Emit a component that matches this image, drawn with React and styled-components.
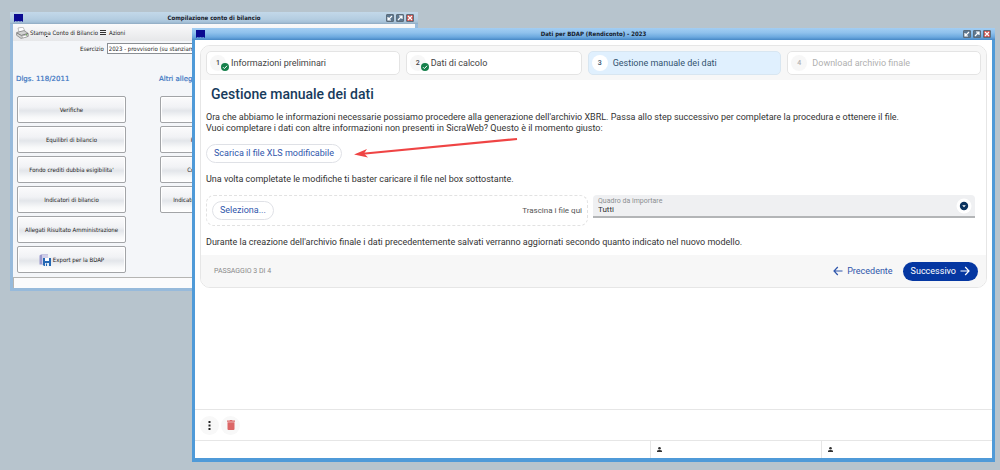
import React from "react";
import styled, { createGlobalStyle, css } from "styled-components";

const GlobalStyle = createGlobalStyle`
  *, *::before, *::after { box-sizing: border-box; }
  html, body { margin: 0; background: #b7c4cd; }
  button, input, select { font: inherit; color: inherit; }
  h1, h2, p { margin: 0; }
`;

const Desktop = styled.main`
  position: relative;
  min-height: 100vh;
  overflow: hidden;
  background: #b7c4cd;
`;

const Window = styled.section`
  position: absolute;
  display: flex;
  flex-direction: column;
  border-style: solid;
`;

const BackWindow = styled(Window)`
  top: 12px;
  left: 10px;
  width: calc(41% - 2px);
  border-width: 0 3px 3px;
  border-color: #97badb;
  background: #f4f6f9;
  color: #222;
  font: 6px/8px "DejaVu Sans Condensed", "DejaVu Sans", sans-serif;
`;

const FrontWindow = styled(Window)`
  top: 28px;
  right: 5px;
  bottom: 8px;
  left: 192px;
  border-width: 0 3px 4px;
  border-color: #4f9ad8;
  background: #fff;
  color: #333;
  font: 9px/11px Roboto, sans-serif;
`;

const TitleBar = styled.header`
  display: grid;
  grid-template-columns: 28px 1fr 28px;
  align-items: center;
  flex: none;
  height: 12px;
  margin: 0 -3px;
  padding: 0 4px;
  background: ${(p) =>
    p.$active
      ? "linear-gradient(#a3cef3 0%, #8fc1ec 40%, #6ca9df 75%, #4788c6 100%)"
      : "linear-gradient(#c3d8e9 0%, #b4cde1 60%, #a5c1d8 85%, #8fa9c0 100%)"};
`;

const WindowTitle = styled.h1`
  text-align: center;
  color: #16202c;
  font: bold 6px/10px "DejaVu Sans Condensed", "DejaVu Sans", sans-serif;
  white-space: nowrap;
`;

const WindowControls = styled.div`
  display: flex;
  gap: 2px;
`;

const ControlButton = styled.button`
  display: grid;
  place-items: center;
  width: 8px;
  height: 8px;
  padding: 0;
  border: 1px solid #5c6c7a;
  border-radius: 1px;
  color: #fff;
  background: ${(p) => (p.$close ? "#c8534f" : "#5d7790")};
`;

const Glyph = styled.svg`
  display: block;
  flex: none;
`;

const MenuBar = styled.nav`
  display: flex;
  align-items: center;
  gap: 2px;
  flex: none;
  height: 17px;
  padding: 0 3px;
  background: linear-gradient(#fafafb, #e6e7e9);
`;

const MenuButton = styled.button`
  display: flex;
  align-items: center;
  gap: ${(p) => p.$gap || 1}px;
  padding: 0;
  border: 0;
  background: none;
`;

const YearRow = styled.div`
  display: flex;
  align-items: center;
  gap: 3px;
  padding: 2px 8px 0 67px;
`;

const YearSelect = styled.select`
  appearance: none;
  flex: 1;
  min-width: 0;
  height: 11px;
  padding: 0 1px;
  border: 1px solid #8a8f94;
  border-radius: 0;
  background: #fff;
`;

const Groups = styled.div`
  display: flex;
  gap: 34px;
  padding: 20px 4px 4px;
`;

const Group = styled.div`
  display: flex;
  flex-direction: column;
  gap: 3px;
  flex: none;
  width: 109px;
`;

const GroupTitle = styled.h2`
  margin-bottom: 9px;
  margin-left: -1px;
  color: #3c75c2;
  font: 7px/10px "DejaVu Sans", sans-serif;
  -webkit-text-stroke: 0.2px #3c75c2;
`;

const ClassicButton = styled.button`
  display: flex;
  align-items: center;
  justify-content: center;
  gap: 2px;
  height: 27px;
  padding: 0;
  border: 1px solid #a2a4a7;
  border-radius: 2px;
  background: linear-gradient(#fbfbfc 0%, #f1f2f5 40%, #e3e6ea 55%, #f7f8f9 80%, #fff 100%);
  box-shadow: inset 0 0 0 1px #fff;
  white-space: nowrap;
`;

const ClassicStatus = styled.footer`
  height: 11px;
  border-top: 1px solid #b5b5b3;
  border-left: 1px solid #b5b5b3;
  background: #fbfbfc;
`;

const Workspace = styled.div`
  flex: 1;
  padding: 5px;
`;

const Card = styled.article`
  overflow: hidden;
  border: 1px solid #e6e6e6;
  border-radius: 10px;
`;

const Steps = styled.ol`
  display: grid;
  grid-template-columns: 1.1fr 1fr 1.1fr 1.1fr;
  gap: 6px;
  margin: 0;
  padding: 5px;
  list-style: none;
  background: #f7f7f7;
`;

const Step = styled.li`
  display: flex;
  align-items: center;
  gap: 5px;
  height: 24px;
  padding: 0 3px;
  border: 1px solid #e4e4e4;
  border-radius: 5px;
  background: #fff;
  color: #444;
  white-space: nowrap;
  ${(p) =>
    p.$current &&
    css`
      border-color: #d8e6f1;
      background: #e0f0fe;
      color: #33536f;
    `}
  ${(p) =>
    p.$disabled &&
    css`
      color: #b0b0b0;
    `}
`;

const StepNumber = styled.span`
  position: relative;
  display: grid;
  place-items: center;
  flex: none;
  width: 16px;
  height: 16px;
  border-radius: 50%;
  background: ${(p) => (p.$current ? "#fff" : "#f7f7f7")};
  font-size: 7px;
  font-weight: 500;
`;

const DoneBadge = styled(Glyph)`
  position: absolute;
  right: -3px;
  bottom: 0;
`;

const Content = styled.div`
  display: flex;
  flex-direction: column;
  align-items: flex-start;
  padding: 5px 11px 7px 5px;
`;

const Heading = styled.h2`
  padding: 0 5px;
  color: #173b5c;
  font-size: 14px;
  line-height: 18px;
  font-weight: 500;
`;

const Copy = styled.p`
  margin-top: ${(p) => p.$top}px;
`;

const OutlineButton = styled.button`
  height: 19px;
  margin-top: ${(p) => p.$top || 0}px;
  padding: 0 7px;
  border: 1px solid #dfe1e6;
  border-radius: 10px;
  background: #fff;
  color: #2f56ab;
  white-space: nowrap;
`;

const ImportRow = styled.div`
  display: grid;
  grid-template-columns: 1fr 1fr;
  align-items: start;
  gap: 5px;
  align-self: stretch;
  margin-top: 10px;
`;

const DropZone = styled.div`
  display: flex;
  align-items: center;
  justify-content: space-between;
  height: 31px;
  padding: 0 5px;
  border: 1px dashed #e2e2e2;
  border-radius: 8px;
`;

const DropHint = styled.span`
  color: #555;
  font-size: 8px;
`;

const Field = styled.div`
  display: flex;
  align-items: center;
  height: 23px;
  padding: 0 3px 0 5px;
  border-bottom: 2px solid #b3b5b7;
  border-radius: 4px 4px 0 0;
  background: #eff0f2;
`;

const FieldText = styled.div`
  display: flex;
  flex-direction: column;
  flex: 1;
`;

const FieldLabel = styled.label`
  color: #8b8e91;
  font-size: 7px;
  line-height: 8px;
`;

const FieldSelect = styled.select`
  appearance: none;
  height: 9px;
  padding: 0;
  border: 0;
  background: none;
  font-size: 8px;
  line-height: 9px;
  color: #333;
`;

const CardFooter = styled.footer`
  display: flex;
  align-items: center;
  gap: 10px;
  height: 32px;
  padding: 0 8px 0 13px;
  background: #f7f7f7;
`;

const Progress = styled.span`
  flex: 1;
  color: #8a8a8a;
  font-size: 7px;
`;

const NavButton = styled.button`
  display: flex;
  align-items: center;
  gap: 4px;
  height: 19px;
  padding: 0 ${(p) => (p.$primary ? 8 : 0)}px;
  border: 0;
  border-radius: 10px;
  background: ${(p) => (p.$primary ? "#0537a2" : "none")};
  color: ${(p) => (p.$primary ? "#fff" : "#2f56ab")};
`;

const Pointer = styled(Glyph)`
  position: absolute;
  top: 108px;
  left: 155px;
  pointer-events: none;
`;

const ActionBar = styled.div`
  display: flex;
  align-items: center;
  gap: 2px;
  height: 31px;
  padding: 0 5px;
  border-top: 1px solid #e6e6e6;
`;

const IconButton = styled.button`
  display: grid;
  place-items: center;
  width: 19px;
  height: 19px;
  padding: 0;
  border: 0;
  border-radius: 50%;
  background: #f8f8f8;
`;

const StatusBar = styled.footer`
  display: grid;
  grid-template-columns: 8fr 3fr 3fr;
  height: 18px;
  border-top: 1px solid #e6e6e6;
`;

const StatusCell = styled.div`
  display: flex;
  align-items: center;
  padding: 0 6px;
  border-left: ${(p) => (p.$divided ? "1px solid #e6e6e6" : "0")};
`;

const AppIcon = () => (
  <Glyph width="9" height="8" viewBox="0 0 9 8">
    <path d="M0 0h9v8L7.5 7 6 7.6 4.500 7 3 7.600 1.500 7 0 8z" fill="#0a0a91" />
  </Glyph>
);

function Controls() {
  const shapes = [
    ["Riduci", "M5 1 1.500 4.500M1 2v3h3"],
    ["Ingrandisci", "M1 5l3.500-3.500M2 1h3v3"],
    ["Chiudi", "M1 1l4 4M5 1 1 5"],
  ];
  return (
    <WindowControls>
      {shapes.map(([name, d]) => (
        <ControlButton key={name} aria-label={name} $close={name === "Chiudi"}>
          <Glyph width="6" height="6" viewBox="0 0 6 6">
            <path d={d} fill="none" stroke="currentColor" strokeWidth="1.200" />
          </Glyph>
        </ControlButton>
      ))}
    </WindowControls>
  );
}

const Printer = () => (
  <Glyph width="13" height="12" viewBox="0 0 13 12">
    <path d="M2 1l5-.8 2 4-6 1z" fill="#fff" stroke="#999" strokeWidth=".6" />
    <path d="M.6 5.500 8 3.600l4.200 2.800v3L5 11.400.6 8.300z" fill="#d2d3d2" stroke="#777" strokeWidth=".7" />
    <path d="M1 6l4.300 2.400 6.700-2" fill="none" stroke="#666" strokeWidth=".8" />
    <path d="M5.500 9.400l4-1.200 2 1.300-4 1.300z" fill="#fff" stroke="#888" strokeWidth=".4" />
    <circle cx="10.500" cy="7.800" r=".7" fill="#67ad50" />
  </Glyph>
);

const Lines = () => (
  <Glyph width="6" height="6" viewBox="0 0 6 6">
    <path d="M0 0h6v1H0zM0 2h6v1H0zM0 4h6v1H0z" fill="#333" />
  </Glyph>
);

const ExportIcon = () => (
  <Glyph width="12" height="12" viewBox="0 0 12 12">
    <path d="M.5 1.500 2 .5h7v10H.5z" fill="#9a98ce" />
    <path d="M3 1h6v9H3z" fill="#d0cee9" />
    <path d="M4 4h8v8H5L4 11z" fill="#2468b4" />
    <path d="M6 4h4v3H6z" fill="#fff" />
    <path d="M6 9h4v3H6z" fill="#e3edf8" />
    <path d="M7 9.500h1V12H7z" fill="#2468b4" />
  </Glyph>
);

const Arrow = ({ back }) => (
  <Glyph width="10" height="10" viewBox="0 0 10 10">
    <path
      d={back ? "M9.500 5H1M4.800 1 1 5l3.800 4" : "M.5 5H9M5.200 1 9 5 5.200 9"}
      fill="none"
      stroke="currentColor"
      strokeWidth="1.200"
    />
  </Glyph>
);

const Person = () => (
  <Glyph width="5" height="5" viewBox="0 0 5 5">
    <circle cx="2.500" cy="1.300" r="1.300" fill="#333" />
    <path d="M0 5V4q0-1 2.500-1T5 4v1z" fill="#333" />
  </Glyph>
);

const leftActions = [
  "Verifiche",
  "Equilibri di bilancio",
  "Fondo crediti dubbia esigibilita'",
  "Indicatori di bilancio",
  "Allegati Risultato Amministrazione",
];
const rightActions = ["Allegati", "Rendiconto spese", "Costi per le missioni", "Indicatori sintetici di bilancio 1"];

const steps = [
  { label: "Informazioni preliminari", done: true },
  { label: "Dati di calcolo", done: true },
  { label: "Gestione manuale dei dati", current: true },
  { label: "Download archivio finale", disabled: true },
];

export default function App() {
  return (
    <Desktop>
      <GlobalStyle />
      <BackWindow>
        <TitleBar>
          <AppIcon />
          <WindowTitle>Compilazione conto di bilancio</WindowTitle>
          <Controls />
        </TitleBar>
        <MenuBar>
          <MenuButton>
            <Printer />
            <span>
              Stam<u>p</u>a Conto di Bilancio
            </span>
          </MenuButton>
          <MenuButton $gap={3}>
            <Lines />
            Azioni
          </MenuButton>
        </MenuBar>
        <YearRow>
          <label htmlFor="year">Esercizio</label>
          <YearSelect id="year">
            <option>2023 - provvisorio (su stanziamenti)</option>
          </YearSelect>
        </YearRow>
        <Groups>
          <Group>
            <GroupTitle>Dlgs. 118/2011</GroupTitle>
            {leftActions.map((label) => (
              <ClassicButton key={label}>{label}</ClassicButton>
            ))}
            <ClassicButton>
              <ExportIcon />
              Export per la BDAP
            </ClassicButton>
          </Group>
          <Group>
            <GroupTitle>Altri allegati</GroupTitle>
            {rightActions.map((label) => (
              <ClassicButton key={label}>{label}</ClassicButton>
            ))}
          </Group>
        </Groups>
        <ClassicStatus />
      </BackWindow>

      <FrontWindow>
        <TitleBar $active>
          <AppIcon />
          <WindowTitle>Dati per BDAP (Rendiconto) - 2023</WindowTitle>
          <Controls />
        </TitleBar>
        <Workspace>
          <Card>
            <Steps>
              {steps.map((s, i) => (
                <Step key={s.label} $current={s.current} $disabled={s.disabled}>
                  <StepNumber $current={s.current}>
                    {i + 1}
                    {s.done && (
                      <DoneBadge width="8" height="8" viewBox="0 0 8 8">
                        <circle cx="4" cy="4" r="4" fill="#16804b" />
                        <path d="M2 4.200l1.400 1.400L6 2.800" fill="none" stroke="#fff" strokeWidth="1" />
                      </DoneBadge>
                    )}
                  </StepNumber>
                  <span>{s.label}</span>
                </Step>
              ))}
            </Steps>
            <Content>
              <Heading>Gestione manuale dei dati</Heading>
              <Copy $top={9}>
                Ora che abbiamo le informazioni necessarie possiamo procedere alla generazione dell'archivio XBRL. Passa
                allo step successivo per completare la procedura e ottenere il file.
                <br />
                Vuoi completare i dati con altre informazioni non presenti in SicraWeb? Questo è il momento giusto:
              </Copy>
              <OutlineButton $top={10}>Scarica il file XLS modificabile</OutlineButton>
              <Copy $top={11}>
                Una volta completate le modifiche ti baster caricare il file nel box sottostante.
              </Copy>
              <ImportRow>
                <DropZone>
                  <OutlineButton>Seleziona...</OutlineButton>
                  <DropHint>Trascina i file qui</DropHint>
                </DropZone>
                <Field>
                  <FieldText>
                    <FieldLabel htmlFor="section">Quadro da importare</FieldLabel>
                    <FieldSelect id="section">
                      <option>Tutti</option>
                    </FieldSelect>
                  </FieldText>
                  <Glyph width="16" height="16" viewBox="0 0 16 16">
                    <circle cx="8" cy="8" r="7.500" fill="#fff" />
                    <circle cx="8" cy="8" r="4.200" fill="#0b335f" />
                    <path d="M6.200 7.300h3.600L8 9.200z" fill="#fff" />
                  </Glyph>
                </Field>
              </ImportRow>
              <Copy $top={11}>
                Durante la creazione dell'archivio finale i dati precedentemente salvati verranno aggiornati secondo
                quanto indicato nel nuovo modello.
              </Copy>
            </Content>
            <CardFooter>
              <Progress>PASSAGGIO 3 DI 4</Progress>
              <NavButton>
                <Arrow back />
                Precedente
              </NavButton>
              <NavButton $primary>
                Successivo
                <Arrow />
              </NavButton>
            </CardFooter>
          </Card>
        </Workspace>
        <ActionBar>
          <IconButton aria-label="Altre azioni">
            <Glyph width="3" height="9" viewBox="0 0 3 9">
              <path d="M.5 0h2v2h-2zM.5 3.500h2v2h-2zM.5 7h2v2h-2z" fill="#222" />
            </Glyph>
          </IconButton>
          <IconButton aria-label="Elimina">
            <Glyph width="8" height="10" viewBox="0 0 8 10">
              <path d="M0 .5h2.500L3 0h2l.5.500H8v1.200H0zM.5 2.200h7V9q0 1-1 1h-5q-1 0-1-1z" fill="#dc6666" />
            </Glyph>
          </IconButton>
        </ActionBar>
        <StatusBar>
          <StatusCell />
          <StatusCell $divided>
            <Person />
          </StatusCell>
          <StatusCell $divided>
            <Person />
          </StatusCell>
        </StatusBar>
        <Pointer width="170" height="24" viewBox="0 0 170 24">
          <path d="M167 3 10 18" stroke="#ef4444" strokeWidth="2.200" />
          <path d="M4 18.500 17 13l-3 4.500 4 4z" fill="#ef4444" />
        </Pointer>
      </FrontWindow>
    </Desktop>
  );
}
